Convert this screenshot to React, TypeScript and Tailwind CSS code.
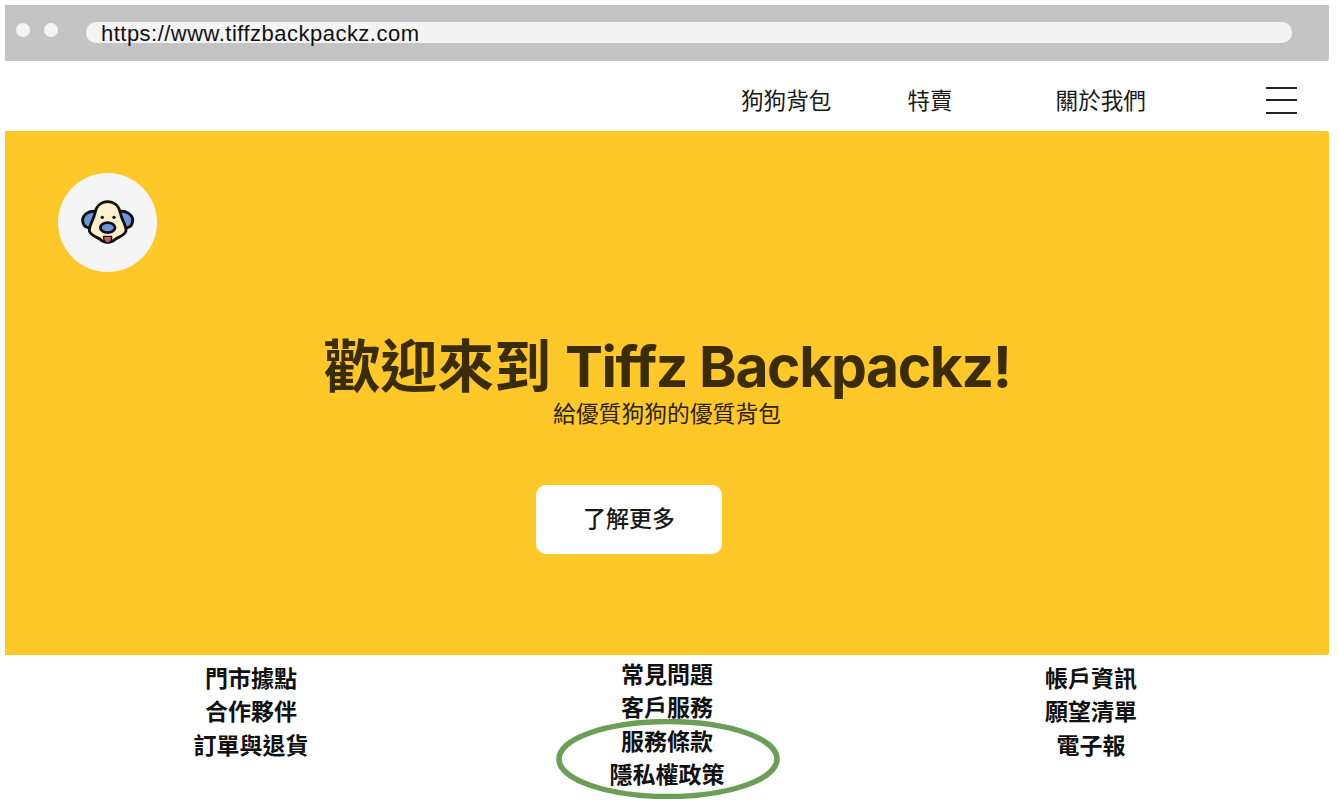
const cjk = "font-['Inter','Noto_Sans_CJK_TC',sans-serif]";

const footerLeft = ["門市據點", "合作夥伴", "訂單與退貨"];
const footerMid = ["常見問題", "客戶服務", "服務條款", "隱私權政策"];
const footerRight = ["帳戶資訊", "願望清單", "電子報"];

const DogLogo = () => (
  <svg width="55" height="49" viewBox="120 115 165 145" fill="none" stroke="#111" strokeWidth="8.5" strokeLinejoin="round" strokeLinecap="round">
    {/* ears */}
    <path d="M172 156 C150 148 126 164 128 183 C130 202 148 210 160 196 Z" fill="#6b95dd" />
    <path d="M234 156 C256 148 280 164 278 183 C276 202 258 210 246 196 Z" fill="#6b95dd" />
    {/* head */}
    <path d="M203 125 C182 125 168 140 164 162 C162 178 148 192 148 212 C150 224 166 230 178 236 C186 244 194 247 203 247 C212 247 220 244 228 236 C240 230 256 224 258 212 C258 192 244 178 242 162 C238 140 224 125 203 125 Z" fill="#fdf0cf" />
    {/* tongue */}
    <path d="M191 229 C188 255 218 255 215 229 Z" fill="#c9635a" strokeWidth="4" />
    {/* nose */}
    <ellipse cx="203" cy="203" rx="22" ry="15" fill="#6b95dd" />
    {/* eyes */}
    <circle cx="187" cy="172" r="5" fill="#111" stroke="none" />
    <circle cx="222" cy="172" r="5" fill="#111" stroke="none" />
  </svg>
);

const FooterCol = ({ items, className }: { items: string[]; className: string }) => (
  <ul className={`w-[200px] text-center text-[23px] leading-[33.3px] font-semibold text-[#111] ${className}`}>
    {items.map((item) => (
      <li key={item}>{item}</li>
    ))}
  </ul>
);

export default function App() {
  return (
    <div className={`w-[1338px] h-[800px] overflow-hidden bg-white pt-[5px] pl-[5px] pr-[9px] ${cjk}`}>
      {/* Browser chrome */}
      <div className="h-[56px] bg-[#c4c4c4] rounded-br-[3px] flex items-center pl-[11px] pr-[37px] pb-[1px]">
        <span className="w-[14px] h-[14px] rounded-full bg-[#f4f4f4] mb-[5px]" />
        <span className="w-[14px] h-[14px] rounded-full bg-[#f4f4f4] ml-[14px] mb-[5px]" />
        <div className="flex-1 h-[21px] ml-[28px] rounded-[10px] bg-[#f4f4f4] pl-[15px] pt-[1px] flex items-center font-['Liberation_Sans',sans-serif] text-[22px] tracking-[0.48px] text-[#111]">
          https://www.tiffzbackpackz.com
        </div>
      </div>

      {/* Nav */}
      <nav className="h-[70px] pt-[10px] flex items-center text-[22.6px] text-[#1a1a1a]">
        <a className="ml-[736px]">狗狗背包</a>
        <a className="ml-[76px]">特賣</a>
        <a className="ml-[103px]">關於我們</a>
        <button className="ml-[120px] -mt-[2px] w-[31px] flex flex-col gap-[10.5px]" aria-label="menu">
          <span className="h-[2px] bg-[#222]" />
          <span className="h-[2px] bg-[#222]" />
          <span className="h-[2px] bg-[#222]" />
        </button>
      </nav>

      {/* Hero */}
      <section className="h-[524px] bg-[#fec828] rounded-tr-[3px] rounded-br-[3px] pt-[42px] pl-[53px] flex flex-col">
        <div className="w-[99px] h-[99px] rounded-full bg-[#f5f5f5] flex items-center justify-center">
          <DogLogo />
        </div>
        <h1 className="-ml-[53px] mt-[55px] text-center text-[57px] leading-[80px] font-bold text-[#3a2c06] whitespace-nowrap">
          歡迎來到 <span className="tracking-[-1.4px]">Tiffz Backpackz!</span>
        </h1>
        <p className="-ml-[53px] -mt-[10px] text-center text-[22.8px] leading-[34px] text-[#2a2208]">給優質狗狗的優質背包</p>
        <button className="ml-[478px] mt-[54px] w-[186px] h-[69px] bg-white rounded-[10px] text-[23px] font-medium text-[#1a1a1a]">
          了解更多
        </button>
      </section>

      {/* Footer links */}
      <footer className="relative flex">
        <FooterCol items={footerLeft} className="ml-[146px] pt-[8px]" />
        <FooterCol items={footerMid} className="ml-[216px] pt-[4px]" />
        <FooterCol items={footerRight} className="ml-[224px] pt-[8px]" />
        {/* hand-drawn highlight round the last two links */}
        <svg className="absolute left-[551px] top-[64px]" width="224" height="80" viewBox="0 0 224 80" fill="none">
          <ellipse cx="112" cy="40" rx="109" ry="37.5" stroke="#6c9e56" strokeWidth="5.5" />
        </svg>
      </footer>
    </div>
  );
}
